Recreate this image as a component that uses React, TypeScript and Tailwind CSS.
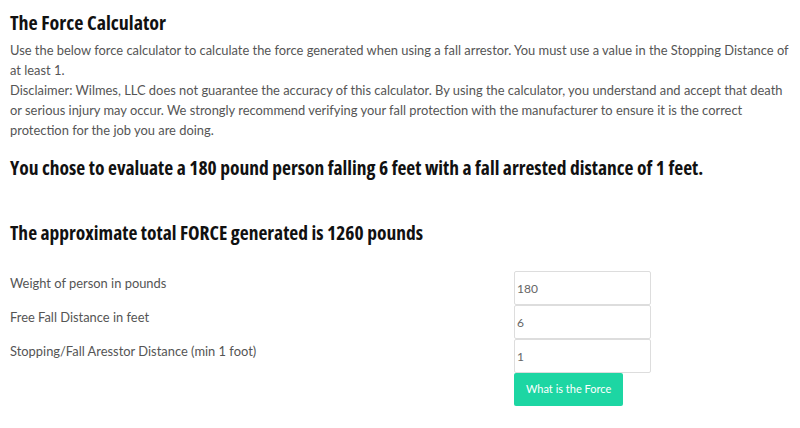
import { useState } from 'react';

const HEAD = "font-['Open_Sans',sans-serif] [font-stretch:75%] font-bold text-[#111]";
const LABEL = 'h-[34px] pt-[2px] leading-[20px]';
const INPUT =
  'h-[34px] rounded-[2px] border border-[#ddd] px-[2px] text-[12px] text-[#666] outline-none';

export default function App() {
  const [weight, setWeight] = useState('180');
  const [fall, setFall] = useState('6');
  const [stop, setStop] = useState('1');

  const force = Math.round(Number(weight) * (Number(fall) / Number(stop) + 1));

  return (
    <div className="min-h-screen bg-white pl-[10px] pr-[6px] pt-[10px] font-['Lato',sans-serif] text-[12.9px] text-[#555]">
      <h1 className={`${HEAD} text-[20px] leading-[26px]`}>The Force Calculator</h1>
      <div className="mt-[4px] leading-[20px]">
        <p>
          Use the below force calculator to calculate the force generated when using a fall arrestor. You must use a value in the Stopping Distance of at least 1.
        </p>
        <p>
          Disclaimer: Wilmes, LLC does not guarantee the accuracy of this calculator. By using the calculator, you understand and accept that death or serious injury may occur. We strongly recommend verifying your fall protection with the manufacturer to ensure it is the correct protection for the job you are doing.
        </p>
      </div>

      <h2 className={`${HEAD} mt-[15px] text-[19.5px] leading-[26px]`}>
        You chose to evaluate a {weight} pound person falling {fall} feet with a fall arrested distance of {stop} feet.
      </h2>
      <h2 className={`${HEAD} mt-[39px] text-[19.5px] leading-[26px]`}>
        The approximate total FORCE generated is {force} pounds
      </h2>

      <div className="mt-[25px] grid grid-cols-[504px_137px]">
        <div className={LABEL}>Weight of person in pounds</div>
        <input className={INPUT} value={weight} onChange={(e) => setWeight(e.target.value)} />
        <div className={LABEL}>Free Fall Distance in feet</div>
        <input className={INPUT} value={fall} onChange={(e) => setFall(e.target.value)} />
        <div className={LABEL}>Stopping/Fall Aresstor Distance (min 1 foot)</div>
        <input className={INPUT} value={stop} onChange={(e) => setStop(e.target.value)} />
        <div />
        <div>
          <button className="h-[33px] rounded-[2px] bg-[#1dd6a3] px-[12px] text-[11px] text-white">
            What is the Force
          </button>
        </div>
      </div>
    </div>
  );
}
